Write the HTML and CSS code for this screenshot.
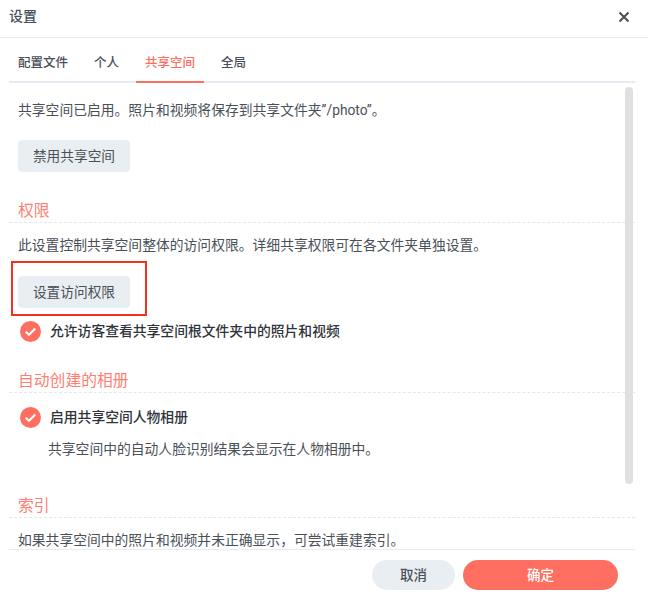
FILE: index.html
```html
<!DOCTYPE html>
<html lang="zh-CN">
<head>
<meta charset="utf-8">
<title>设置</title>
<link rel="stylesheet" href="styles.css">
</head>
<body>
<div class="dialog">
  <header class="head">
    <span class="title">设置</span>
    <svg class="close" width="12" height="12" viewBox="0 0 12 12"><path d="M1.5 1.5l9 9M10.5 1.5l-9 9" fill="none" stroke="#4a5058" stroke-width="2"/></svg>
  </header>
  <nav class="tabs">
    <span class="tab">配置文件</span>
    <span class="tab">个人</span>
    <span class="tab active">共享空间</span>
    <span class="tab">全局</span>
  </nav>
  <main class="body">
    <div class="track"></div>
    <p class="text first">共享空间已启用。照片和视频将保存到共享文件夹”/photo”。</p>
    <button class="btn btn-disable">禁用共享空间</button>
    <h2 class="section">权限</h2>
    <p class="text">此设置控制共享空间整体的访问权限。详细共享权限可在各文件夹单独设置。</p>
    <button class="btn btn-access">设置访问权限</button>
    <div class="check check-guest">
      <svg class="tick" width="21" height="21" viewBox="0 0 22 22"><circle cx="11" cy="11" r="11" fill="#ff6f61"/><path d="M6 11.2l3.4 3.2L16 7.8" fill="none" stroke="#fff" stroke-width="2.2"/></svg>
      <span>允许访客查看共享空间根文件夹中的照片和视频</span>
    </div>
    <h2 class="section">自动创建的相册</h2>
    <div class="check check-people">
      <svg class="tick" width="21" height="21" viewBox="0 0 22 22"><circle cx="11" cy="11" r="11" fill="#ff6f61"/><path d="M6 11.2l3.4 3.2L16 7.8" fill="none" stroke="#fff" stroke-width="2.2"/></svg>
      <span>启用共享空间人物相册</span>
    </div>
    <p class="text indent">共享空间中的自动人脸识别结果会显示在人物相册中。</p>
    <h2 class="section sec-index">索引</h2>
    <p class="text">如果共享空间中的照片和视频并未正确显示，可尝试重建索引。</p>
    <div class="mark"></div>
  </main>
  <footer class="foot">
    <button class="pill cancel">取消</button>
    <button class="pill ok">确定</button>
  </footer>
</div>
</body>
</html>
```
FILE: styles.css
```css
* { box-sizing: border-box; }
html, body { margin: 0; padding: 0; }
body {
  width: 648px;
  height: 599px;
  overflow: hidden;
  background: #fff;
  font-family: Roboto, "Noto Sans CJK SC", sans-serif;
  color: #4a5058;
}
.dialog { display: flex; flex-direction: column; height: 599px; }
.head {
  height: 38px;
  flex: none;
  display: flex;
  align-items: center;
  justify-content: space-between;
  padding: 0 18px 3px 9px;
  border-bottom: 1px solid #e6ecf2;
}
.title { font-size: 14px; font-weight: 500; line-height: 18px; padding-bottom: 3px; color: #4a5058; }
.tabs {
  height: 45px;
  flex: none;
  margin: 0 13px 0 9px;
  display: flex;
  border-bottom: 2px solid #e6ecf2;
}
.tab {
  font-size: 12.5px;
  font-weight: 500;
  line-height: 16px;
  padding: 17px 9px 0;
  margin-right: 8px;
  color: #4a5058;
}
.tab.active {
  color: #ff6f61;
  margin-bottom: -2px;
  border-bottom: 2px solid #ff6f61;
}
.body {
  flex: 1;
  position: relative;
  overflow: hidden;
  margin: 0 13px 0 9px;
  padding: 0 9px;
  border-bottom: 1px solid #e6ecf2;
}
.track {
  position: absolute;
  top: 4px;
  right: 2px;
  width: 8px;
  height: 397px;
  border-radius: 4px;
  background: #e0e0e0;
}
.text { margin: 0; font-size: 13.8px; line-height: 20px; color: #4a5058; white-space: nowrap; }
.first { margin-top: 17px; }
.btn {
  display: block;
  width: 112px;
  height: 32px;
  padding: 0 0 3px;
  border: 0;
  border-radius: 4px;
  background: #e9eef2;
  color: #4a5058;
  font: inherit;
  font-size: 13.7px;
}
.btn-disable { margin-top: 20px; }
.btn-access { margin-top: 21px; }
.section {
  margin: 27px -9px 12px;
  padding: 0 9px;
  height: 24px;
  border-bottom: 1px dashed #e3e8ed;
  font-size: 15.8px;
  font-weight: 400;
  line-height: 23px;
  color: #ff7f73;
}
.check {
  display: flex;
  align-items: center;
  gap: 9px;
  padding-left: 2px;
  font-size: 13.8px;
  font-weight: 500;
  color: #2f343a;
  line-height: 22px;
}
.check-guest { margin-top: 12px; }
.check-people { margin-top: 13px; }
.indent { margin-top: 11px; padding-left: 30px; }
.sec-index { margin-top: 35px; }
.tick { flex: none; }
.mark {
  position: absolute;
  left: 2px;
  top: 178px;
  width: 136px;
  height: 55px;
  border: 2px solid #f5301c;
}
.foot {
  height: 49px;
  flex: none;
  display: flex;
  justify-content: flex-end;
  gap: 8px;
  padding: 10px 30px 0 0;
}
.pill {
  height: 30px;
  border: 0;
  border-radius: 15px;
  padding: 0 0 3px;
  font: inherit;
  font-size: 13.5px;
  font-weight: 500;
}
.cancel { width: 83px; background: #e9eef2; color: #4a5058; }
.ok { width: 155px; background: #ff6f61; color: #fff; }
```
